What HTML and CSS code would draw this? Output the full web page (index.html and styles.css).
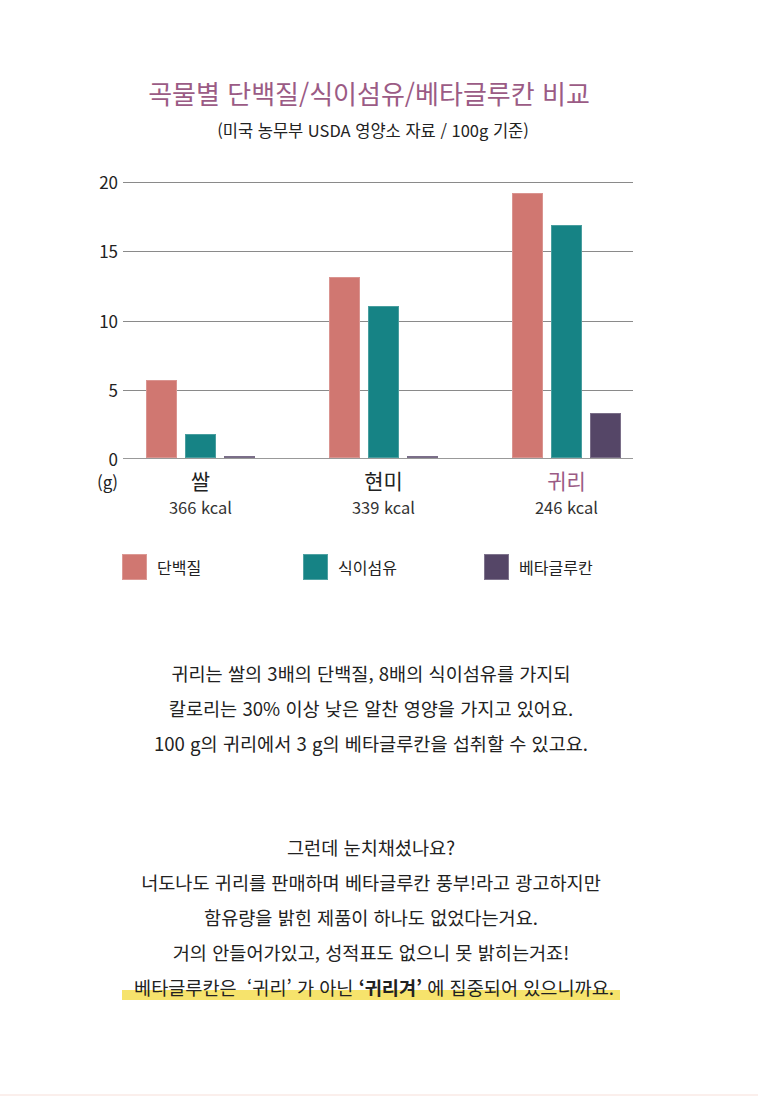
FILE: index.html
```html
<!DOCTYPE html>
<html lang="ko">
<head>
<meta charset="utf-8">
<link rel="stylesheet" href="styles.css">
</head>
<body>
<div class="page">
  <h1 class="title">곡물별 단백질/식이섬유/베타글루칸 비교</h1>
  <p class="subtitle">(미국 농무부 USDA 영양소 자료 / 100g 기준)</p>

  <div class="chart">
    <div class="axis">
      <span>20</span><span>15</span><span>10</span><span>5</span><span>0</span>
    </div>
    <div class="plot">
      <div class="group">
        <div class="bar protein" style="height:78px"></div>
        <div class="bar fiber" style="height:24px"></div>
        <div class="bar beta" style="height:2px"></div>
      </div>
      <div class="group">
        <div class="bar protein" style="height:181px"></div>
        <div class="bar fiber" style="height:152px"></div>
        <div class="bar beta" style="height:2px"></div>
      </div>
      <div class="group">
        <div class="bar protein" style="height:265px"></div>
        <div class="bar fiber" style="height:233px"></div>
        <div class="bar beta" style="height:45px"></div>
      </div>
    </div>
  </div>

  <div class="cats">
    <div class="unit">(g)</div>
    <div class="cat"><div class="name">쌀</div><div class="kcal">366 kcal</div></div>
    <div class="cat"><div class="name">현미</div><div class="kcal">339 kcal</div></div>
    <div class="cat"><div class="name hl">귀리</div><div class="kcal">246 kcal</div></div>
  </div>

  <div class="legend">
    <div class="item"><span class="sw protein"></span>단백질</div>
    <div class="item"><span class="sw fiber"></span>식이섬유</div>
    <div class="item"><span class="sw beta"></span>베타글루칸</div>
  </div>

  <p class="para p1">귀리는 쌀의 3배의 단백질, 8배의 식이섬유를 가지되<br>칼로리는 30% 이상 낮은 알찬 영양을 가지고 있어요.<br>100 g의 귀리에서 3 g의 베타글루칸을 섭취할 수 있고요.</p>

  <p class="para p2">그런데 눈치채셨나요?<br>너도나도 귀리를 판매하며 베타글루칸 풍부!라고 광고하지만<br>함유량을 밝힌 제품이 하나도 없었다는거요.<br>거의 안들어가있고, 성적표도 없으니 못 밝히는거죠!<br><span class="mark">베타글루칸은 &nbsp;‘귀리’ 가 아닌 <b>‘귀리겨’</b> 에 집중되어 있으니까요.</span></p>
</div>
</body>
</html>
```

FILE: styles.css
```css
* { box-sizing: border-box; }
html, body { margin: 0; padding: 0; background: #fff; }
body {
  font-family: "Noto Sans CJK KR", "Noto Sans", sans-serif;
  color: #222;
}
.page {
  width: 758px;
  height: 1096px;
  padding-top: 77px;
  border-bottom: 2px solid #fbefec;
}
.title {
  margin: 0;
  font-size: 26px;
  font-weight: normal;
  line-height: 32px;
  text-align: center;
  color: #9b5b85;
  padding-right: 20px;
}
.subtitle {
  margin: 10px 0 0;
  font-size: 16.5px;
  line-height: 22px;
  text-align: center;
  color: #222;
  padding-right: 12px;
}
.chart {
  display: flex;
  margin-top: 41px;
}
.axis {
  width: 123px;
  padding-right: 5px;
  height: 297px;
  margin-top: -10px;
  display: flex;
  flex-direction: column;
  justify-content: space-between;
  align-items: flex-end;
  font-size: 17px;
  line-height: 20px;
  color: #222;
}
.plot {
  width: 510px;
  height: 277px;
  display: flex;
  align-items: flex-end;
  gap: 74px;
  padding-left: 23px;
  background: repeating-linear-gradient(to bottom, #8a8a8a 0, #8a8a8a 1px, transparent 1px, transparent 69.25px);
  border-bottom: 1.5px solid #999;
}
.group {
  display: flex;
  align-items: flex-end;
  gap: 8px;
}
.bar {
  width: 31px;
  box-shadow: inset 0 0 0 1px rgba(255,255,255,0.22);
}
.protein { background: #d07771; }
.fiber { background: #168385; }
.beta { background: #554667; }

.cats {
  display: flex;
  margin-top: -1px;
}
.unit {
  width: 123px;
  padding-right: 5px;
  text-align: right;
  font-size: 17px;
  line-height: 24px;
  padding-top: 2px;
}
.cat {
  width: 109px;
  text-align: center;
}
.cat + .cat { margin-left: 74px; }
.cat:nth-child(2) { margin-left: 23px; }
.name {
  font-size: 21px;
  line-height: 24px;
  color: #222;
}
.name.hl { color: #9b5b85; }
.kcal {
  margin-top: 5px;
  font-size: 16.5px;
  line-height: 20px;
  color: #333;
}

.legend {
  display: flex;
  margin-top: 37px;
  padding-left: 122px;
}
.item {
  width: 181px;
  display: flex;
  align-items: center;
  gap: 10px;
  font-size: 16px;
  color: #222;
}
.sw {
  width: 25px;
  height: 26px;
  box-shadow: inset 0 0 0 1px rgba(255,255,255,0.25);
}

.para {
  margin: 0;
  text-align: center;
  font-size: 18.6px;
  line-height: 35px;
  color: #222;
  padding-right: 16px;
}
.p1 { margin-top: 75px; }
.p2 { margin-top: 69px; }
.mark {
  padding: 0 6px 0 12px;
  background: linear-gradient(to bottom, transparent 63%, #f6e36c 63%, #f6e36c 100%);
}
.mark b { font-weight: bold; }
```
